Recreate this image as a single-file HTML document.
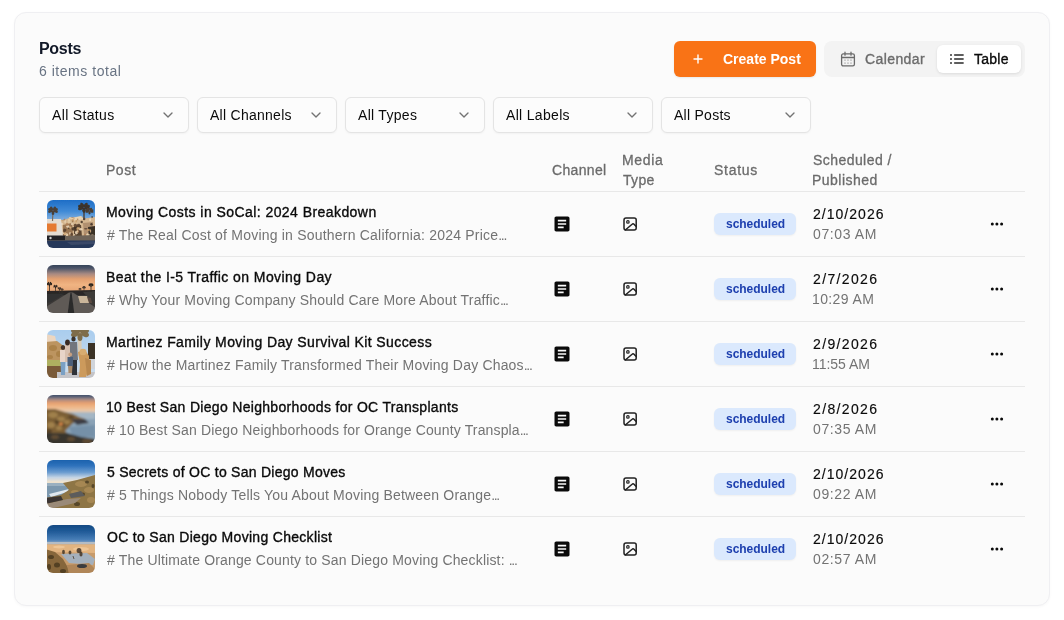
<!DOCTYPE html><html><head><meta charset="utf-8"><style>
*{margin:0;padding:0;box-sizing:border-box}
html,body{width:1064px;height:620px;overflow:hidden;background:#ffffff;font-family:"Liberation Sans", sans-serif;-webkit-font-smoothing:antialiased}
.t{position:absolute;white-space:pre;will-change:transform}
.abs{position:absolute}
.ell{letter-spacing:-1.3px}
.card{position:absolute;left:14px;top:12px;width:1036px;height:594px;border:1px solid #efeff2;border-radius:12px;background:#fbfbfb;box-shadow:0 1px 3px rgba(0,0,0,0.03)}
.dd{position:absolute;top:97px;height:36px;border:1px solid #e4e4e4;border-radius:6px;background:#fcfcfc;box-shadow:0 1px 2px rgba(0,0,0,0.04)}
.hr{position:absolute;left:39px;width:986px;height:1px;background:#e8e8e8}
.badge{position:absolute;left:714px;width:82px;height:22px;border-radius:6px;background:#dbe9fd;box-shadow:0 1px 2px rgba(0,0,0,0.05)}
</style></head><body>
<div class="card"></div>
<div class="t" id="posts" style="left:38.80px;top:36.66px;font-size:16px;line-height:24px;font-weight:700;color:#111827;letter-spacing:-0.300px;">Posts</div>
<div class="t" id="items" style="left:39.00px;top:60.55px;font-size:14px;line-height:21px;font-weight:400;color:#687383;letter-spacing:0.528px;">6 items total</div>
<div class="abs" style="left:674px;top:41px;width:142px;height:36px;border-radius:6px;background:#f97316;box-shadow:0 1px 2px rgba(0,0,0,0.08)"></div>
<svg class="abs" style="left:692px;top:53px" width="12" height="12" viewBox="0 0 12 12"><path d="M6 2V10M2 6H10" stroke="#fff" stroke-width="1.4" fill="none" stroke-linecap="round"/></svg>
<div class="t" id="create" style="left:722.60px;top:48.55px;font-size:14px;line-height:21px;font-weight:700;color:#ffffff;">Create Post</div>
<div class="abs" style="left:824px;top:41px;width:201px;height:36px;border-radius:8px;background:#f3f3f3"></div>
<div class="abs" style="left:937px;top:45px;width:84px;height:28px;border-radius:6px;background:#ffffff;box-shadow:0 1px 3px rgba(0,0,0,0.10)"></div>
<svg class="abs" style="left:840px;top:51px" width="16" height="16" viewBox="0 0 16 16" fill="none" stroke="#6b6b6b" stroke-width="1.3" stroke-linecap="round"><rect x="1.6" y="2.9" width="12.8" height="12" rx="1.6"/><path d="M5 1.2v3M11 1.2v3M1.6 6.5h12.8"/><g fill="#6b6b6b" stroke="none"><circle cx="5" cy="9" r=".6"/><circle cx="8" cy="9" r=".6"/><circle cx="11" cy="9" r=".6"/><circle cx="5" cy="12" r=".6"/><circle cx="8" cy="12" r=".6"/><circle cx="11" cy="12" r=".6"/></g></svg>
<div class="t" id="calendar" style="left:864.80px;top:48.95px;font-size:14px;line-height:21px;font-weight:400;color:#6b6b6b;letter-spacing:0.398px;-webkit-text-stroke:0.35px #6b6b6b;">Calendar</div>
<svg class="abs" style="left:944px;top:48px" width="28" height="22" viewBox="0 0 28 22" fill="#333"><rect x="6" y="6" width="2" height="2" rx=".3" fill="#666"/><rect x="6" y="10" width="2" height="2" rx=".3" fill="#666"/><rect x="6" y="14" width="2" height="2" rx=".3" fill="#666"/><rect x="9.9" y="6.2" width="10" height="1.6" rx=".8" fill="#2a2a2a"/><rect x="9.9" y="10.2" width="10" height="1.6" rx=".8" fill="#2a2a2a"/><rect x="9.9" y="14.2" width="10" height="1.6" rx=".8" fill="#2a2a2a"/></svg>
<div class="t" id="table" style="left:973.80px;top:48.95px;font-size:14px;line-height:21px;font-weight:400;color:#0a0a0a;letter-spacing:0.250px;-webkit-text-stroke:0.35px #0a0a0a;">Table</div>
<div class="dd" style="left:39px;width:150px"></div>
<div class="t" id="dd0" style="left:52.40px;top:104.65px;font-size:14px;line-height:21px;font-weight:400;color:#0a0a0a;letter-spacing:0.342px;">All Status</div>
<svg class="abs" style="left:160px;top:107px" width="16" height="16" viewBox="0 0 24 24" fill="none" stroke="#737373" stroke-width="2" stroke-linecap="round" stroke-linejoin="round"><path d="m6 9 6 6 6-6"/></svg>
<div class="dd" style="left:197px;width:140px"></div>
<div class="t" id="dd1" style="left:209.60px;top:104.65px;font-size:14px;line-height:21px;font-weight:400;color:#0a0a0a;letter-spacing:0.265px;">All Channels</div>
<svg class="abs" style="left:308px;top:107px" width="16" height="16" viewBox="0 0 24 24" fill="none" stroke="#737373" stroke-width="2" stroke-linecap="round" stroke-linejoin="round"><path d="m6 9 6 6 6-6"/></svg>
<div class="dd" style="left:345px;width:140px"></div>
<div class="t" id="dd2" style="left:357.80px;top:104.65px;font-size:14px;line-height:21px;font-weight:400;color:#0a0a0a;letter-spacing:0.292px;">All Types</div>
<svg class="abs" style="left:456px;top:107px" width="16" height="16" viewBox="0 0 24 24" fill="none" stroke="#737373" stroke-width="2" stroke-linecap="round" stroke-linejoin="round"><path d="m6 9 6 6 6-6"/></svg>
<div class="dd" style="left:493px;width:160px"></div>
<div class="t" id="dd3" style="left:505.60px;top:104.65px;font-size:14px;line-height:21px;font-weight:400;color:#0a0a0a;letter-spacing:0.323px;">All Labels</div>
<svg class="abs" style="left:624px;top:107px" width="16" height="16" viewBox="0 0 24 24" fill="none" stroke="#737373" stroke-width="2" stroke-linecap="round" stroke-linejoin="round"><path d="m6 9 6 6 6-6"/></svg>
<div class="dd" style="left:661px;width:150px"></div>
<div class="t" id="dd4" style="left:673.60px;top:104.65px;font-size:14px;line-height:21px;font-weight:400;color:#0a0a0a;letter-spacing:0.267px;">All Posts</div>
<svg class="abs" style="left:782px;top:107px" width="16" height="16" viewBox="0 0 24 24" fill="none" stroke="#737373" stroke-width="2" stroke-linecap="round" stroke-linejoin="round"><path d="m6 9 6 6 6-6"/></svg>
<div class="t" id="hPost" style="left:106.20px;top:159.95px;font-size:14px;line-height:21px;font-weight:400;color:#6b6b6b;letter-spacing:0.530px;-webkit-text-stroke:0.3px #6b6b6b;">Post</div>
<div class="t" id="hChannel" style="left:551.80px;top:159.65px;font-size:14px;line-height:21px;font-weight:400;color:#6b6b6b;letter-spacing:0.333px;-webkit-text-stroke:0.3px #6b6b6b;">Channel</div>
<div class="t" id="hMedia" style="left:621.80px;top:150.15px;font-size:14px;line-height:21px;font-weight:400;color:#6b6b6b;letter-spacing:0.650px;-webkit-text-stroke:0.3px #6b6b6b;">Media</div>
<div class="t" id="hType" style="left:622.80px;top:170.15px;font-size:14px;line-height:21px;font-weight:400;color:#6b6b6b;letter-spacing:0.333px;-webkit-text-stroke:0.3px #6b6b6b;">Type</div>
<div class="t" id="hStatus" style="left:714.40px;top:159.65px;font-size:14px;line-height:21px;font-weight:400;color:#6b6b6b;letter-spacing:0.720px;-webkit-text-stroke:0.3px #6b6b6b;">Status</div>
<div class="t" id="hSched" style="left:813.00px;top:150.15px;font-size:14px;line-height:21px;font-weight:400;color:#6b6b6b;letter-spacing:0.440px;-webkit-text-stroke:0.3px #6b6b6b;">Scheduled /</div>
<div class="t" id="hPubl" style="left:812.00px;top:170.15px;font-size:14px;line-height:21px;font-weight:400;color:#6b6b6b;letter-spacing:0.467px;-webkit-text-stroke:0.3px #6b6b6b;">Published</div>
<div class="hr" style="top:191px"></div>
<div class="hr" style="top:256px"></div>
<div class="abs" style="left:47px;top:200px;width:48px;height:48px;border-radius:6px;overflow:hidden"><svg width="48" height="48" viewBox="0 0 48 48" style="display:block"><defs><linearGradient id="s1" x1="0" y1="0" x2="0" y2="1"><stop offset="0" stop-color="#1868c4"/><stop offset="0.55" stop-color="#3f8ad6"/><stop offset="1" stop-color="#90b8e0"/></linearGradient><filter id="b1" x="-10%" y="-10%" width="120%" height="120%"><feGaussianBlur stdDeviation="0.5"/></filter></defs><g filter="url(#b1)"><rect x="-2" y="-2" width="52" height="24" fill="url(#s1)"/><rect x="-2" y="20" width="52" height="30" fill="#a88a68"/><path d="M12 22 L22 18 L34 19 L48 17 L48 38 L12 38Z" fill="#d4b690"/><path d="M24 18 L34 16 L38 19 L26 21Z" fill="#e8d4b4"/><path d="M16 25 L25 23 L26 36 L16 37Z" fill="#9a7652"/><path d="M27 26 L34 25 L35 37 L27 37Z" fill="#5a4430"/><path d="M36 23 L46 22 L46 34 L37 35Z" fill="#b09070"/><path d="M41 27 L48 26 L48 37 L42 37Z" fill="#3a3028"/><clipPath id="c1_3"><path d="M14 20 L22 17 L34 18 L48 16 L48 38 L14 38Z"/></clipPath><g clip-path="url(#c1_3)"><ellipse cx="22.1" cy="28.0" rx="1.0" ry="1.3" fill="#3e3024" opacity="0.85"/><ellipse cx="33.7" cy="29.3" rx="1.7" ry="1.2" fill="#f0dcc0" opacity="0.85"/><ellipse cx="22.0" cy="37.9" rx="1.2" ry="1.6" fill="#b08058" opacity="0.85"/><ellipse cx="27.5" cy="34.9" rx="0.9" ry="0.8" fill="#f0dcc0" opacity="0.85"/><ellipse cx="27.3" cy="16.3" rx="1.5" ry="0.8" fill="#f0dcc0" opacity="0.85"/><ellipse cx="15.5" cy="33.2" rx="1.6" ry="0.9" fill="#f0dcc0" opacity="0.85"/><ellipse cx="38.4" cy="35.3" rx="1.5" ry="1.7" fill="#b08058" opacity="0.85"/><ellipse cx="38.8" cy="28.7" rx="1.8" ry="0.8" fill="#5a4230" opacity="0.85"/><ellipse cx="17.3" cy="19.0" rx="0.9" ry="1.8" fill="#b08058" opacity="0.85"/><ellipse cx="40.5" cy="34.8" rx="1.1" ry="1.6" fill="#f0dcc0" opacity="0.85"/><ellipse cx="25.9" cy="28.9" rx="1.3" ry="1.7" fill="#3e3024" opacity="0.85"/><ellipse cx="45.1" cy="16.6" rx="0.9" ry="1.3" fill="#3e3024" opacity="0.85"/><ellipse cx="19.5" cy="34.9" rx="1.8" ry="1.7" fill="#f0dcc0" opacity="0.85"/><ellipse cx="17.5" cy="30.4" rx="1.4" ry="1.8" fill="#5a4230" opacity="0.85"/><ellipse cx="23.7" cy="17.4" rx="1.6" ry="1.8" fill="#e8d0a8" opacity="0.85"/><ellipse cx="25.7" cy="17.5" rx="1.7" ry="0.6" fill="#b08058" opacity="0.85"/><ellipse cx="40.1" cy="35.2" rx="0.7" ry="1.3" fill="#e8d0a8" opacity="0.85"/><ellipse cx="26.8" cy="28.9" rx="1.3" ry="1.7" fill="#5a4230" opacity="0.85"/><ellipse cx="31.2" cy="38.0" rx="1.0" ry="0.7" fill="#f0dcc0" opacity="0.85"/><ellipse cx="32.2" cy="36.9" rx="1.8" ry="0.9" fill="#5a4230" opacity="0.85"/><ellipse cx="19.3" cy="16.9" rx="1.6" ry="1.0" fill="#c89c68" opacity="0.85"/><ellipse cx="44.5" cy="24.3" rx="1.2" ry="1.2" fill="#3e3024" opacity="0.85"/><ellipse cx="43.5" cy="31.0" rx="0.7" ry="1.8" fill="#d8b080" opacity="0.85"/><ellipse cx="31.2" cy="25.5" rx="1.5" ry="0.9" fill="#5a4230" opacity="0.85"/><ellipse cx="28.9" cy="21.7" rx="1.0" ry="1.0" fill="#d8b080" opacity="0.85"/><ellipse cx="28.1" cy="28.8" rx="0.6" ry="1.3" fill="#3e3024" opacity="0.85"/><ellipse cx="18.5" cy="29.9" rx="1.0" ry="1.0" fill="#5a4230" opacity="0.85"/><ellipse cx="34.7" cy="22.1" rx="1.2" ry="1.3" fill="#3e3024" opacity="0.85"/><ellipse cx="14.7" cy="24.1" rx="1.4" ry="1.0" fill="#f0dcc0" opacity="0.85"/><ellipse cx="24.9" cy="24.0" rx="1.0" ry="1.0" fill="#f0dcc0" opacity="0.85"/><ellipse cx="23.0" cy="33.3" rx="0.7" ry="1.6" fill="#f0dcc0" opacity="0.85"/><ellipse cx="37.2" cy="18.9" rx="1.2" ry="1.4" fill="#5a4230" opacity="0.85"/><ellipse cx="22.1" cy="20.1" rx="1.1" ry="1.4" fill="#e8d0a8" opacity="0.85"/><ellipse cx="34.4" cy="36.9" rx="1.4" ry="0.9" fill="#d8b080" opacity="0.85"/><ellipse cx="43.1" cy="19.7" rx="1.0" ry="1.4" fill="#f0dcc0" opacity="0.85"/><ellipse cx="29.3" cy="21.0" rx="0.7" ry="1.2" fill="#c89c68" opacity="0.85"/><ellipse cx="24.7" cy="34.4" rx="1.3" ry="1.6" fill="#5a4230" opacity="0.85"/><ellipse cx="41.4" cy="30.1" rx="1.6" ry="1.0" fill="#c89c68" opacity="0.85"/><ellipse cx="28.3" cy="27.4" rx="1.6" ry="1.2" fill="#3e3024" opacity="0.85"/><ellipse cx="28.2" cy="25.2" rx="1.1" ry="1.7" fill="#c89c68" opacity="0.85"/><ellipse cx="20.8" cy="26.5" rx="1.6" ry="1.3" fill="#f0dcc0" opacity="0.85"/><ellipse cx="28.8" cy="36.9" rx="1.7" ry="0.9" fill="#3e3024" opacity="0.85"/><ellipse cx="29.5" cy="32.6" rx="1.5" ry="1.8" fill="#f0dcc0" opacity="0.85"/><ellipse cx="25.6" cy="21.0" rx="0.7" ry="1.3" fill="#5a4230" opacity="0.85"/><ellipse cx="18.1" cy="21.4" rx="0.6" ry="1.6" fill="#f0dcc0" opacity="0.85"/><ellipse cx="45.4" cy="35.7" rx="1.7" ry="1.3" fill="#e8d0a8" opacity="0.85"/><ellipse cx="30.4" cy="18.7" rx="1.2" ry="0.9" fill="#e8d0a8" opacity="0.85"/><ellipse cx="31.8" cy="25.1" rx="1.7" ry="1.3" fill="#5a4230" opacity="0.85"/><ellipse cx="18.3" cy="37.4" rx="1.2" ry="1.6" fill="#e8d0a8" opacity="0.85"/><ellipse cx="26.0" cy="20.3" rx="1.2" ry="1.6" fill="#c89c68" opacity="0.85"/><ellipse cx="22.1" cy="22.0" rx="1.7" ry="0.8" fill="#e8d0a8" opacity="0.85"/><ellipse cx="30.6" cy="28.6" rx="1.1" ry="1.5" fill="#c89c68" opacity="0.85"/><ellipse cx="23.1" cy="27.6" rx="1.1" ry="1.2" fill="#d8b080" opacity="0.85"/><ellipse cx="41.9" cy="34.9" rx="1.5" ry="0.7" fill="#e8d0a8" opacity="0.85"/><ellipse cx="16.3" cy="37.4" rx="1.6" ry="0.7" fill="#f0dcc0" opacity="0.85"/><ellipse cx="30.7" cy="19.5" rx="0.7" ry="1.1" fill="#b08058" opacity="0.85"/><ellipse cx="33.9" cy="23.9" rx="0.8" ry="1.0" fill="#e8d0a8" opacity="0.85"/><ellipse cx="18.3" cy="16.1" rx="1.5" ry="1.6" fill="#f0dcc0" opacity="0.85"/><ellipse cx="20.1" cy="24.2" rx="1.3" ry="1.5" fill="#b08058" opacity="0.85"/><ellipse cx="35.6" cy="17.0" rx="1.7" ry="0.7" fill="#3e3024" opacity="0.85"/><ellipse cx="30.9" cy="31.5" rx="1.1" ry="1.4" fill="#b08058" opacity="0.85"/><ellipse cx="14.6" cy="20.8" rx="0.9" ry="1.3" fill="#d8b080" opacity="0.85"/><ellipse cx="28.4" cy="25.4" rx="1.7" ry="1.7" fill="#5a4230" opacity="0.85"/><ellipse cx="46.9" cy="28.3" rx="1.6" ry="0.7" fill="#3e3024" opacity="0.85"/><ellipse cx="18.2" cy="33.9" rx="1.4" ry="1.7" fill="#d8b080" opacity="0.85"/><ellipse cx="26.8" cy="18.4" rx="1.0" ry="1.2" fill="#d8b080" opacity="0.85"/><ellipse cx="34.0" cy="16.1" rx="0.8" ry="1.5" fill="#e8d0a8" opacity="0.85"/><ellipse cx="31.9" cy="28.4" rx="1.4" ry="1.1" fill="#d8b080" opacity="0.85"/><ellipse cx="14.8" cy="34.5" rx="0.7" ry="1.6" fill="#3e3024" opacity="0.85"/><ellipse cx="30.4" cy="31.3" rx="0.9" ry="1.0" fill="#e8d0a8" opacity="0.85"/></g><path d="M-2 19 L14 19 L16 36 L-2 36Z" fill="#e4dcd2"/><rect x="-2" y="23.5" width="11.5" height="8" fill="#e57a32"/><rect x="-2" y="35.5" width="21" height="5" fill="#222226"/><circle cx="3.5" cy="38" r="1.2" fill="#d0d0d0"/><path d="M18 36 L48 35 L48 41 L18 41Z" fill="#6e6458"/><rect x="-2" y="40.5" width="52" height="9" fill="#27375a"/><path d="M20 42 L48 41 L48 44 L24 45Z" fill="#3a4a68"/><path d="M6 10.5 L5.5 21" stroke="#7a6a5a" stroke-width="1.1"/><ellipse cx="3.2" cy="9.7" rx="2.2" ry="1.4" transform="rotate(200 3.2 9.7)" fill="#4a4038"/><ellipse cx="4.5" cy="8.6" rx="2.2" ry="1.4" transform="rotate(240 4.5 8.6)" fill="#4a4038"/><ellipse cx="7.5" cy="8.6" rx="2.2" ry="1.4" transform="rotate(300 7.5 8.6)" fill="#4a4038"/><ellipse cx="8.8" cy="9.7" rx="2.2" ry="1.4" transform="rotate(340 8.8 9.7)" fill="#4a4038"/><ellipse cx="8.8" cy="11.3" rx="2.2" ry="1.4" transform="rotate(20 8.8 11.3)" fill="#4a4038"/><ellipse cx="3.2" cy="11.3" rx="2.2" ry="1.4" transform="rotate(160 3.2 11.3)" fill="#4a4038"/><ellipse cx="6.0" cy="12.8" rx="2.2" ry="1.4" transform="rotate(90 6.0 12.8)" fill="#4a4038"/><path d="M37 7.5 L37 20" stroke="#4a4038" stroke-width="1.4"/><ellipse cx="33.6" cy="6.6" rx="2.7" ry="1.7" transform="rotate(200 33.6 6.6)" fill="#3c342c"/><ellipse cx="35.2" cy="5.2" rx="2.7" ry="1.7" transform="rotate(240 35.2 5.2)" fill="#3c342c"/><ellipse cx="38.8" cy="5.2" rx="2.7" ry="1.7" transform="rotate(300 38.8 5.2)" fill="#3c342c"/><ellipse cx="40.4" cy="6.6" rx="2.7" ry="1.7" transform="rotate(340 40.4 6.6)" fill="#3c342c"/><ellipse cx="40.4" cy="8.4" rx="2.7" ry="1.7" transform="rotate(20 40.4 8.4)" fill="#3c342c"/><ellipse cx="33.6" cy="8.4" rx="2.7" ry="1.7" transform="rotate(160 33.6 8.4)" fill="#3c342c"/><ellipse cx="37.0" cy="10.2" rx="2.7" ry="1.7" transform="rotate(90 37.0 10.2)" fill="#3c342c"/><ellipse cx="40.2" cy="10.4" rx="1.8" ry="1.1" transform="rotate(200 40.2 10.4)" fill="#4a3e32"/><ellipse cx="41.3" cy="9.4" rx="1.8" ry="1.1" transform="rotate(240 41.3 9.4)" fill="#4a3e32"/><ellipse cx="43.7" cy="9.4" rx="1.8" ry="1.1" transform="rotate(300 43.7 9.4)" fill="#4a3e32"/><ellipse cx="44.8" cy="10.4" rx="1.8" ry="1.1" transform="rotate(340 44.8 10.4)" fill="#4a3e32"/><ellipse cx="44.8" cy="11.6" rx="1.8" ry="1.1" transform="rotate(20 44.8 11.6)" fill="#4a3e32"/><ellipse cx="40.2" cy="11.6" rx="1.8" ry="1.1" transform="rotate(160 40.2 11.6)" fill="#4a3e32"/><ellipse cx="42.5" cy="12.8" rx="1.8" ry="1.1" transform="rotate(90 42.5 12.8)" fill="#4a3e32"/></g></svg></div>
<div class="t" id="title0" style="left:106.40px;top:201.75px;font-size:14px;line-height:21px;font-weight:400;color:#0a0a0a;letter-spacing:0.436px;-webkit-text-stroke:0.35px #0a0a0a;">Moving Costs in SoCal: 2024 Breakdown</div>
<div class="t" id="sub0" style="left:107.40px;top:225.35px;font-size:14px;line-height:21px;font-weight:400;color:#737373;letter-spacing:0.208px;"># The Real Cost of Moving in Southern California: 2024 Price<span class="ell">...</span></div>
<svg class="abs" style="left:551.8px;top:213.5px" width="20" height="20" viewBox="0 0 24 24"><path fill="#0a0a0a" d="M19 3H5c-1.1 0-2 .9-2 2v14c0 1.1.9 2 2 2h14c1.1 0 2-.9 2-2V5c0-1.1-.9-2-2-2zm-5 14H7v-2h7v2zm3-4H7v-2h10v2zm0-4H7V7h10v2z"/></svg>
<svg class="abs" style="left:621px;top:215px" width="18" height="18" viewBox="0 0 18 18" fill="none" stroke="#222" stroke-width="1.5" stroke-linecap="round" stroke-linejoin="round"><rect x="3" y="3" width="12.2" height="12" rx="2"/><circle cx="6.9" cy="6.9" r="1.25" stroke-width="1.2"/><path d="M15.2 11.6l-2.2-2.4a1.3 1.3 0 0 0-1.9 0L4.3 15"/></svg>
<div class="badge" style="top:213px"></div>
<div class="t" id="badge0" style="left:725.70px;top:214.64px;font-size:12px;line-height:18px;font-weight:700;color:#1e40af;letter-spacing:-0.025px;">scheduled</div>
<div class="t" id="date0" style="left:813.00px;top:203.65px;font-size:14px;line-height:21px;font-weight:400;color:#0a0a0a;letter-spacing:1.025px;-webkit-text-stroke:0.15px #0a0a0a;">2/10/2026</div>
<div class="t" id="time0" style="left:813.20px;top:223.55px;font-size:14px;line-height:21px;font-weight:400;color:#737373;letter-spacing:0.608px;">07:03 AM</div>
<svg class="abs" style="left:988px;top:220px" width="18" height="8" viewBox="0 0 18 8"><circle cx="4.3" cy="4" r="1.5" fill="#0a0a0a"/><circle cx="8.9" cy="4" r="1.5" fill="#0a0a0a"/><circle cx="13.6" cy="4" r="1.5" fill="#0a0a0a"/></svg>
<div class="hr" style="top:321px"></div>
<div class="abs" style="left:47px;top:265px;width:48px;height:48px;border-radius:6px;overflow:hidden"><svg width="48" height="48" viewBox="0 0 48 48" style="display:block"><defs><linearGradient id="s2" x1="0" y1="0" x2="0" y2="1"><stop offset="0" stop-color="#28384e"/><stop offset="0.16" stop-color="#4a5468"/><stop offset="0.34" stop-color="#a88a82"/><stop offset="0.5" stop-color="#e4a070"/><stop offset="0.68" stop-color="#f0b482"/><stop offset="0.85" stop-color="#e8a878"/><stop offset="1" stop-color="#b08060"/></linearGradient><filter id="b2" x="-10%" y="-10%" width="120%" height="120%"><feGaussianBlur stdDeviation="0.6"/></filter></defs><g filter="url(#b2)"><rect x="-2" y="-2" width="52" height="32" fill="url(#s2)"/><rect x="-2" y="26" width="52" height="24" fill="#3a3836"/><path d="M-2 26 L48 25 L48 30 L-2 30Z" fill="#2a2826"/><path d="M-14 50 L22 27.5 L26 27.5 L60 50Z" fill="#5e5a56"/><path d="M20.5 50 L23.4 28 L24.6 28 L27.5 50Z" fill="#2a2a2a"/><path d="M-2 29 L18 28.5 L4 37 L-2 38Z" fill="#303030"/><path d="M36 27 L48 26 L48 36 L42 34Z" fill="#3c3a38"/><path d="M31 31 L40 31 L43 38 L33 38Z" fill="#cab69a"/><path d="M40 32 L44 33 L45 38 L42 38Z" fill="#5a4a40"/><path d="M2.5 19 L2.5 28" stroke="#2e2620" stroke-width="0.8"/><ellipse cx="1.0" cy="18.6" rx="1.2" ry="0.7" transform="rotate(200 1.0 18.6)" fill="#2e2620"/><ellipse cx="1.7" cy="18.0" rx="1.2" ry="0.7" transform="rotate(240 1.7 18.0)" fill="#2e2620"/><ellipse cx="3.3" cy="18.0" rx="1.2" ry="0.7" transform="rotate(300 3.3 18.0)" fill="#2e2620"/><ellipse cx="4.0" cy="18.6" rx="1.2" ry="0.7" transform="rotate(340 4.0 18.6)" fill="#2e2620"/><ellipse cx="4.0" cy="19.4" rx="1.2" ry="0.7" transform="rotate(20 4.0 19.4)" fill="#2e2620"/><ellipse cx="1.0" cy="19.4" rx="1.2" ry="0.7" transform="rotate(160 1.0 19.4)" fill="#2e2620"/><ellipse cx="2.5" cy="20.2" rx="1.2" ry="0.7" transform="rotate(90 2.5 20.2)" fill="#2e2620"/><path d="M8.5 21.5 L8.5 28" stroke="#2e2620" stroke-width="0.7"/><ellipse cx="7.3" cy="21.2" rx="1.0" ry="0.6" transform="rotate(200 7.3 21.2)" fill="#2e2620"/><ellipse cx="7.8" cy="20.6" rx="1.0" ry="0.6" transform="rotate(240 7.8 20.6)" fill="#2e2620"/><ellipse cx="9.2" cy="20.6" rx="1.0" ry="0.6" transform="rotate(300 9.2 20.6)" fill="#2e2620"/><ellipse cx="9.7" cy="21.2" rx="1.0" ry="0.6" transform="rotate(340 9.7 21.2)" fill="#2e2620"/><ellipse cx="9.7" cy="21.8" rx="1.0" ry="0.6" transform="rotate(20 9.7 21.8)" fill="#2e2620"/><ellipse cx="7.3" cy="21.8" rx="1.0" ry="0.6" transform="rotate(160 7.3 21.8)" fill="#2e2620"/><ellipse cx="8.5" cy="22.5" rx="1.0" ry="0.6" transform="rotate(90 8.5 22.5)" fill="#2e2620"/><path d="M12.5 23.5 L12.5 28" stroke="#3a3028" stroke-width="0.6"/><ellipse cx="11.5" cy="23.2" rx="0.8" ry="0.5" transform="rotate(200 11.5 23.2)" fill="#3a3028"/><ellipse cx="12.0" cy="22.8" rx="0.8" ry="0.5" transform="rotate(240 12.0 22.8)" fill="#3a3028"/><ellipse cx="13.0" cy="22.8" rx="0.8" ry="0.5" transform="rotate(300 13.0 22.8)" fill="#3a3028"/><ellipse cx="13.5" cy="23.2" rx="0.8" ry="0.5" transform="rotate(340 13.5 23.2)" fill="#3a3028"/><ellipse cx="13.5" cy="23.8" rx="0.8" ry="0.5" transform="rotate(20 13.5 23.8)" fill="#3a3028"/><ellipse cx="11.5" cy="23.8" rx="0.8" ry="0.5" transform="rotate(160 11.5 23.8)" fill="#3a3028"/><ellipse cx="12.5" cy="24.3" rx="0.8" ry="0.5" transform="rotate(90 12.5 24.3)" fill="#3a3028"/><path d="M15 24.5 L15 28" stroke="#3a3028" stroke-width="0.6"/><ellipse cx="14.1" cy="24.3" rx="0.7" ry="0.4" transform="rotate(200 14.1 24.3)" fill="#3a3028"/><ellipse cx="14.5" cy="23.9" rx="0.7" ry="0.4" transform="rotate(240 14.5 23.9)" fill="#3a3028"/><ellipse cx="15.5" cy="23.9" rx="0.7" ry="0.4" transform="rotate(300 15.5 23.9)" fill="#3a3028"/><ellipse cx="15.9" cy="24.3" rx="0.7" ry="0.4" transform="rotate(340 15.9 24.3)" fill="#3a3028"/><ellipse cx="15.9" cy="24.7" rx="0.7" ry="0.4" transform="rotate(20 15.9 24.7)" fill="#3a3028"/><ellipse cx="14.1" cy="24.7" rx="0.7" ry="0.4" transform="rotate(160 14.1 24.7)" fill="#3a3028"/><ellipse cx="15.0" cy="25.2" rx="0.7" ry="0.4" transform="rotate(90 15.0 25.2)" fill="#3a3028"/><path d="M44 20 L44 27" stroke="#2e2620" stroke-width="0.8"/><ellipse cx="42.6" cy="19.6" rx="1.1" ry="0.7" transform="rotate(200 42.6 19.6)" fill="#2e2620"/><ellipse cx="43.3" cy="19.1" rx="1.1" ry="0.7" transform="rotate(240 43.3 19.1)" fill="#2e2620"/><ellipse cx="44.7" cy="19.1" rx="1.1" ry="0.7" transform="rotate(300 44.7 19.1)" fill="#2e2620"/><ellipse cx="45.4" cy="19.6" rx="1.1" ry="0.7" transform="rotate(340 45.4 19.6)" fill="#2e2620"/><ellipse cx="45.4" cy="20.4" rx="1.1" ry="0.7" transform="rotate(20 45.4 20.4)" fill="#2e2620"/><ellipse cx="42.6" cy="20.4" rx="1.1" ry="0.7" transform="rotate(160 42.6 20.4)" fill="#2e2620"/><ellipse cx="44.0" cy="21.1" rx="1.1" ry="0.7" transform="rotate(90 44.0 21.1)" fill="#2e2620"/><path d="M37 22.5 L37 27" stroke="#3a3028" stroke-width="0.6"/><ellipse cx="36.0" cy="22.2" rx="0.8" ry="0.5" transform="rotate(200 36.0 22.2)" fill="#3a3028"/><ellipse cx="36.5" cy="21.8" rx="0.8" ry="0.5" transform="rotate(240 36.5 21.8)" fill="#3a3028"/><ellipse cx="37.5" cy="21.8" rx="0.8" ry="0.5" transform="rotate(300 37.5 21.8)" fill="#3a3028"/><ellipse cx="38.0" cy="22.2" rx="0.8" ry="0.5" transform="rotate(340 38.0 22.2)" fill="#3a3028"/><ellipse cx="38.0" cy="22.8" rx="0.8" ry="0.5" transform="rotate(20 38.0 22.8)" fill="#3a3028"/><ellipse cx="36.0" cy="22.8" rx="0.8" ry="0.5" transform="rotate(160 36.0 22.8)" fill="#3a3028"/><ellipse cx="37.0" cy="23.3" rx="0.8" ry="0.5" transform="rotate(90 37.0 23.3)" fill="#3a3028"/><path d="M33 24 L33 27" stroke="#3a3028" stroke-width="0.5"/><ellipse cx="32.2" cy="23.8" rx="0.6" ry="0.4" transform="rotate(200 32.2 23.8)" fill="#3a3028"/><ellipse cx="32.6" cy="23.5" rx="0.6" ry="0.4" transform="rotate(240 32.6 23.5)" fill="#3a3028"/><ellipse cx="33.4" cy="23.5" rx="0.6" ry="0.4" transform="rotate(300 33.4 23.5)" fill="#3a3028"/><ellipse cx="33.8" cy="23.8" rx="0.6" ry="0.4" transform="rotate(340 33.8 23.8)" fill="#3a3028"/><ellipse cx="33.8" cy="24.2" rx="0.6" ry="0.4" transform="rotate(20 33.8 24.2)" fill="#3a3028"/><ellipse cx="32.2" cy="24.2" rx="0.6" ry="0.4" transform="rotate(160 32.2 24.2)" fill="#3a3028"/><ellipse cx="33.0" cy="24.6" rx="0.6" ry="0.4" transform="rotate(90 33.0 24.6)" fill="#3a3028"/></g></svg></div>
<div class="t" id="title1" style="left:106.40px;top:266.75px;font-size:14px;line-height:21px;font-weight:400;color:#0a0a0a;letter-spacing:0.430px;-webkit-text-stroke:0.35px #0a0a0a;">Beat the I-5 Traffic on Moving Day</div>
<div class="t" id="sub1" style="left:107.40px;top:290.35px;font-size:14px;line-height:21px;font-weight:400;color:#737373;letter-spacing:0.170px;"># Why Your Moving Company Should Care More About Traffic<span class="ell">...</span></div>
<svg class="abs" style="left:551.8px;top:278.5px" width="20" height="20" viewBox="0 0 24 24"><path fill="#0a0a0a" d="M19 3H5c-1.1 0-2 .9-2 2v14c0 1.1.9 2 2 2h14c1.1 0 2-.9 2-2V5c0-1.1-.9-2-2-2zm-5 14H7v-2h7v2zm3-4H7v-2h10v2zm0-4H7V7h10v2z"/></svg>
<svg class="abs" style="left:621px;top:280px" width="18" height="18" viewBox="0 0 18 18" fill="none" stroke="#222" stroke-width="1.5" stroke-linecap="round" stroke-linejoin="round"><rect x="3" y="3" width="12.2" height="12" rx="2"/><circle cx="6.9" cy="6.9" r="1.25" stroke-width="1.2"/><path d="M15.2 11.6l-2.2-2.4a1.3 1.3 0 0 0-1.9 0L4.3 15"/></svg>
<div class="badge" style="top:278px"></div>
<div class="t" id="badge1" style="left:725.70px;top:279.64px;font-size:12px;line-height:18px;font-weight:700;color:#1e40af;letter-spacing:-0.025px;">scheduled</div>
<div class="t" id="date1" style="left:813.00px;top:268.65px;font-size:14px;line-height:21px;font-weight:400;color:#0a0a0a;letter-spacing:1.363px;-webkit-text-stroke:0.15px #0a0a0a;">2/7/2026</div>
<div class="t" id="time1" style="left:812.20px;top:288.55px;font-size:14px;line-height:21px;font-weight:400;color:#737373;letter-spacing:0.384px;">10:29 AM</div>
<svg class="abs" style="left:988px;top:285px" width="18" height="8" viewBox="0 0 18 8"><circle cx="4.3" cy="4" r="1.5" fill="#0a0a0a"/><circle cx="8.9" cy="4" r="1.5" fill="#0a0a0a"/><circle cx="13.6" cy="4" r="1.5" fill="#0a0a0a"/></svg>
<div class="hr" style="top:386px"></div>
<div class="abs" style="left:47px;top:330px;width:48px;height:48px;border-radius:6px;overflow:hidden"><svg width="48" height="48" viewBox="0 0 48 48" style="display:block"><defs><linearGradient id="s3" x1="0" y1="0" x2="0" y2="1"><stop offset="0" stop-color="#a8ccee"/><stop offset="1" stop-color="#d0e0ee"/></linearGradient><filter id="b3" x="-10%" y="-10%" width="120%" height="120%"><feGaussianBlur stdDeviation="0.55"/></filter></defs><g filter="url(#b3)"><rect x="-2" y="-2" width="52" height="52" fill="url(#s3)"/><path d="M-2 4 L8 6 L12 24 L-2 26Z" fill="#ecd6c0"/><rect x="41" y="13" width="8" height="16" fill="#3a3028"/><rect x="40" y="29" width="9" height="10" fill="#d0d4da"/><path d="M30 -2 L34 -2 L35 26 L31 26Z" fill="#d8ccb8"/><ellipse cx="27.9" cy="1.6" rx="4.0" ry="2.5" transform="rotate(200 27.9 1.6)" fill="#7e6c4a"/><ellipse cx="30.3" cy="-0.5" rx="4.0" ry="2.5" transform="rotate(240 30.3 -0.5)" fill="#7e6c4a"/><ellipse cx="35.7" cy="-0.5" rx="4.0" ry="2.5" transform="rotate(300 35.7 -0.5)" fill="#7e6c4a"/><ellipse cx="38.1" cy="1.6" rx="4.0" ry="2.5" transform="rotate(340 38.1 1.6)" fill="#7e6c4a"/><ellipse cx="38.1" cy="4.4" rx="4.0" ry="2.5" transform="rotate(20 38.1 4.4)" fill="#7e6c4a"/><ellipse cx="27.9" cy="4.4" rx="4.0" ry="2.5" transform="rotate(160 27.9 4.4)" fill="#7e6c4a"/><ellipse cx="33.0" cy="7.0" rx="4.0" ry="2.5" transform="rotate(90 33.0 7.0)" fill="#7e6c4a"/><path d="M-2 12 L10 11 L18 17 L18 32 L-2 33Z" fill="#bc9460"/><ellipse cx="6" cy="18" rx="4" ry="3" fill="#a88048" opacity="0.9"/><ellipse cx="12" cy="24" rx="3" ry="3" fill="#a88048" opacity="0.9"/><ellipse cx="3" cy="27" rx="3" ry="2" fill="#a88048" opacity="0.9"/><rect x="-2" y="30" width="16" height="7" fill="#aeb060"/><rect x="-2" y="36" width="16" height="14" fill="#7a5a38"/><rect x="10" y="42" width="38" height="8" fill="#c4c4c8"/><path d="M13 20 L19 19 L19 32 L13 32Z" fill="#e8d4c8"/><path d="M13.5 32 L18.5 32 L18 45 L14 45Z" fill="#7aa0c4"/><ellipse cx="16" cy="17.5" rx="2.2" ry="2.6" fill="#4a3428"/><path d="M18 14 L23 13 L23 32 L18 32Z" fill="#d8c0b0"/><ellipse cx="20.5" cy="12.5" rx="2.4" ry="3" fill="#3a2a20"/><path d="M23 12 L30 12 L31 30 L23 30Z" fill="#72767e"/><path d="M24 30 L30 30 L30 45 L25 45Z" fill="#2e3038"/><ellipse cx="26.5" cy="9" rx="2.2" ry="2.6" fill="#3a302a"/><path d="M20.5 27 L26 27 L26 36 L20.5 36Z" fill="#4c5e7a"/><path d="M21 36 L25.5 36 L25 43 L21.5 43Z" fill="#a88a6a"/><ellipse cx="23.2" cy="24.5" rx="1.9" ry="2.1" fill="#c8a080"/><path d="M31 22 L38 20 L42 26 L42 38 L39 47 L32 47 L33 34Z" fill="#cc9a5c"/><ellipse cx="36" cy="22" rx="3.5" ry="3.2" fill="#d8ac70"/><path d="M38 28 L44 30 L44 44 L40 46Z" fill="#b88850"/></g></svg></div>
<div class="t" id="title2" style="left:106.40px;top:331.75px;font-size:14px;line-height:21px;font-weight:400;color:#0a0a0a;letter-spacing:0.399px;-webkit-text-stroke:0.35px #0a0a0a;">Martinez Family Moving Day Survival Kit Success</div>
<div class="t" id="sub2" style="left:107.40px;top:355.35px;font-size:14px;line-height:21px;font-weight:400;color:#737373;letter-spacing:0.181px;"># How the Martinez Family Transformed Their Moving Day Chaos<span class="ell">...</span></div>
<svg class="abs" style="left:551.8px;top:343.5px" width="20" height="20" viewBox="0 0 24 24"><path fill="#0a0a0a" d="M19 3H5c-1.1 0-2 .9-2 2v14c0 1.1.9 2 2 2h14c1.1 0 2-.9 2-2V5c0-1.1-.9-2-2-2zm-5 14H7v-2h7v2zm3-4H7v-2h10v2zm0-4H7V7h10v2z"/></svg>
<svg class="abs" style="left:621px;top:345px" width="18" height="18" viewBox="0 0 18 18" fill="none" stroke="#222" stroke-width="1.5" stroke-linecap="round" stroke-linejoin="round"><rect x="3" y="3" width="12.2" height="12" rx="2"/><circle cx="6.9" cy="6.9" r="1.25" stroke-width="1.2"/><path d="M15.2 11.6l-2.2-2.4a1.3 1.3 0 0 0-1.9 0L4.3 15"/></svg>
<div class="badge" style="top:343px"></div>
<div class="t" id="badge2" style="left:725.70px;top:344.64px;font-size:12px;line-height:18px;font-weight:700;color:#1e40af;letter-spacing:-0.025px;">scheduled</div>
<div class="t" id="date2" style="left:813.00px;top:333.65px;font-size:14px;line-height:21px;font-weight:400;color:#0a0a0a;letter-spacing:1.363px;-webkit-text-stroke:0.15px #0a0a0a;">2/9/2026</div>
<div class="t" id="time2" style="left:812.20px;top:353.55px;font-size:14px;line-height:21px;font-weight:400;color:#737373;letter-spacing:-0.038px;">11:55 AM</div>
<svg class="abs" style="left:988px;top:350px" width="18" height="8" viewBox="0 0 18 8"><circle cx="4.3" cy="4" r="1.5" fill="#0a0a0a"/><circle cx="8.9" cy="4" r="1.5" fill="#0a0a0a"/><circle cx="13.6" cy="4" r="1.5" fill="#0a0a0a"/></svg>
<div class="hr" style="top:451px"></div>
<div class="abs" style="left:47px;top:395px;width:48px;height:48px;border-radius:6px;overflow:hidden"><svg width="48" height="48" viewBox="0 0 48 48" style="display:block"><defs><linearGradient id="s4" x1="0" y1="0" x2="0" y2="1"><stop offset="0" stop-color="#3a4c66"/><stop offset="0.18" stop-color="#4e5a72"/><stop offset="0.3" stop-color="#9a8688"/><stop offset="0.48" stop-color="#e49e6e"/><stop offset="0.7" stop-color="#f0b888"/><stop offset="0.95" stop-color="#e4ccb4"/><stop offset="1" stop-color="#c8c8c8"/></linearGradient><filter id="b4" x="-10%" y="-10%" width="120%" height="120%"><feGaussianBlur stdDeviation="0.85"/></filter></defs><g filter="url(#b4)"><rect x="-2" y="-2" width="52" height="20" fill="url(#s4)"/><rect x="-2" y="17.5" width="52" height="33" fill="#8aa2b6"/><path d="M20 18 L48 18 L48 24 L26 24Z" fill="#a4b6c4"/><path d="M22 32 L48 30 L48 42 L26 42Z" fill="#7490a8"/><path d="M-2 14 L8 14 L18 17 L26 19 L32 22 L38 24 L34 27 L26 28 L22 32 L18 36 L22 40 L30 43 L-2 50Z" fill="#7c5e36"/><ellipse cx="6" cy="20" rx="5" ry="3" fill="#a4844e" opacity="0.9"/><ellipse cx="14" cy="24" rx="4" ry="2.5" fill="#a4844e" opacity="0.9"/><ellipse cx="4" cy="30" rx="4" ry="3" fill="#a4844e" opacity="0.9"/><ellipse cx="12" cy="33" rx="3" ry="2" fill="#a4844e" opacity="0.9"/><ellipse cx="20" cy="27" rx="3" ry="2" fill="#a4844e" opacity="0.9"/><ellipse cx="10" cy="27" rx="2.5" ry="2" fill="#4e3c26" opacity="0.8"/><ellipse cx="2" cy="36" rx="3" ry="2" fill="#4e3c26" opacity="0.8"/><ellipse cx="16" cy="30" rx="2" ry="1.5" fill="#4e3c26" opacity="0.8"/><ellipse cx="24" cy="22" rx="3" ry="1.5" fill="#4e3c26" opacity="0.8"/><ellipse cx="14" cy="29" rx="1.8" ry="1.5" fill="#e08848"/><path d="M24 24 L38 24 L42 28 L30 30Z" fill="#3e3e44"/><path d="M-2 38 L20 38 L34 42 L48 44 L48 50 L-2 50Z" fill="#38342e"/><ellipse cx="8" cy="42" rx="4" ry="2" fill="#6a5234" opacity="0.8"/><ellipse cx="24" cy="44" rx="4" ry="2" fill="#6a5234" opacity="0.8"/><ellipse cx="40" cy="46" rx="5" ry="2" fill="#6a5234" opacity="0.8"/></g></svg></div>
<div class="t" id="title3" style="left:106.40px;top:396.75px;font-size:14px;line-height:21px;font-weight:400;color:#0a0a0a;letter-spacing:0.311px;-webkit-text-stroke:0.35px #0a0a0a;">10 Best San Diego Neighborhoods for OC Transplants</div>
<div class="t" id="sub3" style="left:107.40px;top:420.35px;font-size:14px;line-height:21px;font-weight:400;color:#737373;letter-spacing:0.148px;"># 10 Best San Diego Neighborhoods for Orange County Transpla<span class="ell">...</span></div>
<svg class="abs" style="left:551.8px;top:408.5px" width="20" height="20" viewBox="0 0 24 24"><path fill="#0a0a0a" d="M19 3H5c-1.1 0-2 .9-2 2v14c0 1.1.9 2 2 2h14c1.1 0 2-.9 2-2V5c0-1.1-.9-2-2-2zm-5 14H7v-2h7v2zm3-4H7v-2h10v2zm0-4H7V7h10v2z"/></svg>
<svg class="abs" style="left:621px;top:410px" width="18" height="18" viewBox="0 0 18 18" fill="none" stroke="#222" stroke-width="1.5" stroke-linecap="round" stroke-linejoin="round"><rect x="3" y="3" width="12.2" height="12" rx="2"/><circle cx="6.9" cy="6.9" r="1.25" stroke-width="1.2"/><path d="M15.2 11.6l-2.2-2.4a1.3 1.3 0 0 0-1.9 0L4.3 15"/></svg>
<div class="badge" style="top:408px"></div>
<div class="t" id="badge3" style="left:725.70px;top:409.64px;font-size:12px;line-height:18px;font-weight:700;color:#1e40af;letter-spacing:-0.025px;">scheduled</div>
<div class="t" id="date3" style="left:813.00px;top:398.65px;font-size:14px;line-height:21px;font-weight:400;color:#0a0a0a;letter-spacing:1.363px;-webkit-text-stroke:0.15px #0a0a0a;">2/8/2026</div>
<div class="t" id="time3" style="left:813.20px;top:418.55px;font-size:14px;line-height:21px;font-weight:400;color:#737373;letter-spacing:0.616px;">07:35 AM</div>
<svg class="abs" style="left:988px;top:415px" width="18" height="8" viewBox="0 0 18 8"><circle cx="4.3" cy="4" r="1.5" fill="#0a0a0a"/><circle cx="8.9" cy="4" r="1.5" fill="#0a0a0a"/><circle cx="13.6" cy="4" r="1.5" fill="#0a0a0a"/></svg>
<div class="hr" style="top:516px"></div>
<div class="abs" style="left:47px;top:460px;width:48px;height:48px;border-radius:6px;overflow:hidden"><svg width="48" height="48" viewBox="0 0 48 48" style="display:block"><defs><linearGradient id="s5" x1="0" y1="0" x2="0" y2="1"><stop offset="0" stop-color="#155ca8"/><stop offset="0.3" stop-color="#2f72bc"/><stop offset="0.55" stop-color="#6a9cd0"/><stop offset="0.75" stop-color="#c4d4e4"/><stop offset="0.92" stop-color="#f0e4d0"/><stop offset="1" stop-color="#e8dcc8"/></linearGradient><filter id="b5" x="-10%" y="-10%" width="120%" height="120%"><feGaussianBlur stdDeviation="0.75"/></filter></defs><g filter="url(#b5)"><rect x="-2" y="-2" width="52" height="26" fill="url(#s5)"/><rect x="-2" y="23" width="52" height="27" fill="#7c98ae"/><path d="M-2 23 L20 23 L18 26 L-2 26Z" fill="#9ab0c0"/><path d="M2 34 L22 29 L20 32 L4 37Z" fill="#e0e8ee"/><path d="M16 23 L30 20 L48 15 L48 50 L-2 50 L-2 38 L14 35 L22 30Z" fill="#8e7444"/><ellipse cx="34" cy="24" rx="6" ry="3" fill="#a88a54" opacity="0.9"/><ellipse cx="42" cy="30" rx="5" ry="3" fill="#a88a54" opacity="0.9"/><ellipse cx="28" cy="32" rx="4" ry="2" fill="#a88a54" opacity="0.9"/><ellipse cx="44" cy="40" rx="4" ry="3" fill="#a88a54" opacity="0.9"/><ellipse cx="40" cy="22" rx="2" ry="1.5" fill="#4a3c24" opacity="0.8"/><ellipse cx="36" cy="34" rx="2" ry="1.5" fill="#4a3c24" opacity="0.8"/><ellipse cx="46" cy="26" rx="1.5" ry="2" fill="#4a3c24" opacity="0.8"/><ellipse cx="30" cy="44" rx="3" ry="2" fill="#4a3c24" opacity="0.8"/><path d="M22 34 L34 31 L38 36 L24 38Z" fill="#5c5c5c"/><path d="M-2 44 L20 39 L34 38 L28 43 L-2 50Z" fill="#9a8a78"/><path d="M-2 38 L14 36 L16 40 L-2 44Z" fill="#3a3530"/></g></svg></div>
<div class="t" id="title4" style="left:107.40px;top:461.75px;font-size:14px;line-height:21px;font-weight:400;color:#0a0a0a;letter-spacing:0.267px;-webkit-text-stroke:0.35px #0a0a0a;">5 Secrets of OC to San Diego Moves</div>
<div class="t" id="sub4" style="left:107.40px;top:485.35px;font-size:14px;line-height:21px;font-weight:400;color:#737373;letter-spacing:0.187px;"># 5 Things Nobody Tells You About Moving Between Orange<span class="ell">...</span></div>
<svg class="abs" style="left:551.8px;top:473.5px" width="20" height="20" viewBox="0 0 24 24"><path fill="#0a0a0a" d="M19 3H5c-1.1 0-2 .9-2 2v14c0 1.1.9 2 2 2h14c1.1 0 2-.9 2-2V5c0-1.1-.9-2-2-2zm-5 14H7v-2h7v2zm3-4H7v-2h10v2zm0-4H7V7h10v2z"/></svg>
<svg class="abs" style="left:621px;top:475px" width="18" height="18" viewBox="0 0 18 18" fill="none" stroke="#222" stroke-width="1.5" stroke-linecap="round" stroke-linejoin="round"><rect x="3" y="3" width="12.2" height="12" rx="2"/><circle cx="6.9" cy="6.9" r="1.25" stroke-width="1.2"/><path d="M15.2 11.6l-2.2-2.4a1.3 1.3 0 0 0-1.9 0L4.3 15"/></svg>
<div class="badge" style="top:473px"></div>
<div class="t" id="badge4" style="left:725.70px;top:474.64px;font-size:12px;line-height:18px;font-weight:700;color:#1e40af;letter-spacing:-0.025px;">scheduled</div>
<div class="t" id="date4" style="left:813.00px;top:463.65px;font-size:14px;line-height:21px;font-weight:400;color:#0a0a0a;letter-spacing:1.025px;-webkit-text-stroke:0.15px #0a0a0a;">2/10/2026</div>
<div class="t" id="time4" style="left:813.20px;top:483.55px;font-size:14px;line-height:21px;font-weight:400;color:#737373;letter-spacing:0.608px;">09:22 AM</div>
<svg class="abs" style="left:988px;top:480px" width="18" height="8" viewBox="0 0 18 8"><circle cx="4.3" cy="4" r="1.5" fill="#0a0a0a"/><circle cx="8.9" cy="4" r="1.5" fill="#0a0a0a"/><circle cx="13.6" cy="4" r="1.5" fill="#0a0a0a"/></svg>
<div class="abs" style="left:47px;top:525px;width:48px;height:48px;border-radius:6px;overflow:hidden"><svg width="48" height="48" viewBox="0 0 48 48" style="display:block"><defs><linearGradient id="s6" x1="0" y1="0" x2="0" y2="1"><stop offset="0" stop-color="#10447c"/><stop offset="0.45" stop-color="#225c9a"/><stop offset="0.85" stop-color="#4a80b8"/><stop offset="1" stop-color="#8aa4c0"/></linearGradient><filter id="b6" x="-10%" y="-10%" width="120%" height="120%"><feGaussianBlur stdDeviation="0.75"/></filter></defs><g filter="url(#b6)"><rect x="-2" y="-2" width="52" height="20" fill="url(#s6)"/><rect x="-2" y="17" width="52" height="33" fill="#c89c6c"/><path d="M-2 17 L48 17 L48 19.5 L-2 19.5Z" fill="#b4bcc4"/><path d="M-2 19.5 L48 19.5 L48 28 L-2 27Z" fill="#e2b480"/><ellipse cx="12" cy="22" rx="6" ry="1.5" fill="#f0c898" opacity="0.9"/><ellipse cx="34" cy="24" rx="8" ry="2" fill="#f0c898" opacity="0.9"/><path d="M14 29 L40 28 L48 34 L46 40 L22 38Z" fill="#a4b0bc"/><path d="M-2 24 L8 27 L16 34 L24 48 L-2 50Z" fill="#86663a"/><ellipse cx="4" cy="32" rx="3" ry="2" fill="#4a3820" opacity="0.85"/><ellipse cx="10" cy="40" rx="3" ry="2.5" fill="#4a3820" opacity="0.85"/><ellipse cx="16" cy="46" rx="3" ry="2" fill="#4a3820" opacity="0.85"/><ellipse cx="2" cy="42" rx="2" ry="3" fill="#4a3820" opacity="0.85"/><path d="M20 40 L42 38 L48 44 L48 50 L22 50Z" fill="#b08658"/><ellipse cx="35" cy="41" rx="5" ry="2" fill="#3a3a3e"/><ellipse cx="16.5" cy="27" rx="1.4" ry="2.2" fill="#4a3c2c" opacity="0.9"/><ellipse cx="23" cy="27.5" rx="1.4" ry="2" fill="#4a3c2c" opacity="0.9"/><ellipse cx="32" cy="25.5" rx="2.4" ry="2.6" fill="#4a3c2c" opacity="0.9"/><ellipse cx="34" cy="29" rx="1.6" ry="2.5" fill="#4a3c2c" opacity="0.9"/><path d="M26 31 L27 34" stroke="#4a3c2c" stroke-width=".8"/></g></svg></div>
<div class="t" id="title5" style="left:107.40px;top:526.75px;font-size:14px;line-height:21px;font-weight:400;color:#0a0a0a;letter-spacing:0.303px;-webkit-text-stroke:0.35px #0a0a0a;">OC to San Diego Moving Checklist</div>
<div class="t" id="sub5" style="left:107.40px;top:550.35px;font-size:14px;line-height:21px;font-weight:400;color:#737373;letter-spacing:0.164px;"># The Ultimate Orange County to San Diego Moving Checklist: <span class="ell">...</span></div>
<svg class="abs" style="left:551.8px;top:538.5px" width="20" height="20" viewBox="0 0 24 24"><path fill="#0a0a0a" d="M19 3H5c-1.1 0-2 .9-2 2v14c0 1.1.9 2 2 2h14c1.1 0 2-.9 2-2V5c0-1.1-.9-2-2-2zm-5 14H7v-2h7v2zm3-4H7v-2h10v2zm0-4H7V7h10v2z"/></svg>
<svg class="abs" style="left:621px;top:540px" width="18" height="18" viewBox="0 0 18 18" fill="none" stroke="#222" stroke-width="1.5" stroke-linecap="round" stroke-linejoin="round"><rect x="3" y="3" width="12.2" height="12" rx="2"/><circle cx="6.9" cy="6.9" r="1.25" stroke-width="1.2"/><path d="M15.2 11.6l-2.2-2.4a1.3 1.3 0 0 0-1.9 0L4.3 15"/></svg>
<div class="badge" style="top:538px"></div>
<div class="t" id="badge5" style="left:725.70px;top:539.64px;font-size:12px;line-height:18px;font-weight:700;color:#1e40af;letter-spacing:-0.025px;">scheduled</div>
<div class="t" id="date5" style="left:813.00px;top:528.65px;font-size:14px;line-height:21px;font-weight:400;color:#0a0a0a;letter-spacing:1.025px;-webkit-text-stroke:0.15px #0a0a0a;">2/10/2026</div>
<div class="t" id="time5" style="left:813.20px;top:548.55px;font-size:14px;line-height:21px;font-weight:400;color:#737373;letter-spacing:0.616px;">02:57 AM</div>
<svg class="abs" style="left:988px;top:545px" width="18" height="8" viewBox="0 0 18 8"><circle cx="4.3" cy="4" r="1.5" fill="#0a0a0a"/><circle cx="8.9" cy="4" r="1.5" fill="#0a0a0a"/><circle cx="13.6" cy="4" r="1.5" fill="#0a0a0a"/></svg>
</body></html>
